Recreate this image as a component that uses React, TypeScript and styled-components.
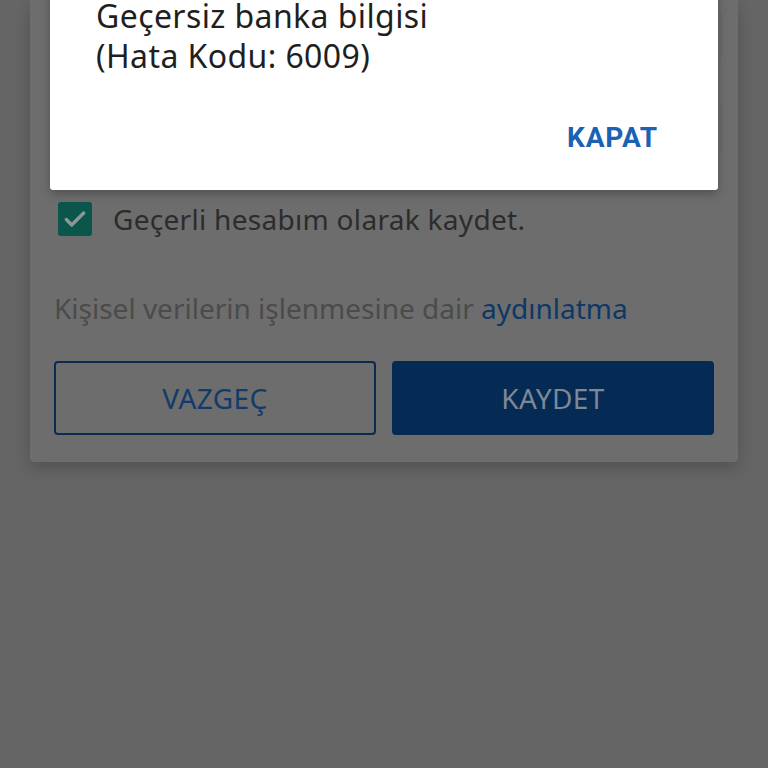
import React from "react";
import styled, { createGlobalStyle } from "styled-components";

const GlobalStyle = createGlobalStyle`
  html, body {
    margin: 0;
    padding: 0;
    background: #656565;
  }
  * {
    box-sizing: border-box;
  }
`;

const Screen = styled.div`
  position: relative;
  width: 768px;
  height: 768px;
  overflow: hidden;
  background: #656565;
  font-family: "Noto Sans", "Open Sans", sans-serif;
`;

const Card = styled.div`
  margin: 0 30px;
  padding: 8px 16px 27px 24px;
  background: #6d6d6d;
  border-radius: 0 0 4px 4px;
  box-shadow: 0 6px 16px rgba(0, 0, 0, 0.2);
  display: flex;
  flex-direction: column;
`;

const Field = styled.div<{ $gap: number }>`
  height: 54px;
  margin-bottom: ${(p) => p.$gap}px;
  border: 1px solid #666666;
  border-radius: 8px;
`;

const CheckRow = styled.label`
  display: flex;
  align-items: center;
  gap: 21px;
  padding-left: 4px;
  height: 34px;
  margin-bottom: 54px;
`;

const Box = styled.span`
  width: 34px;
  height: 34px;
  border-radius: 3px;
  background: #0a564b;
  display: flex;
  align-items: center;
  justify-content: center;
`;

const CheckLabel = styled.span`
  font-size: 28px;
  letter-spacing: 0.3px;
  color: #2c2c2c;
`;

const Consent = styled.p`
  margin: 0 0 35px;
  font-size: 28px;
  line-height: 36px;
  color: #4b4b4b;
  white-space: nowrap;
`;

const Link = styled.span`
  color: #0d3866;
`;

const Actions = styled.div`
  display: grid;
  grid-template-columns: 322px 322px;
  gap: 16px;
`;

const Button = styled.button<{ $primary?: boolean }>`
  height: 74px;
  border-radius: 4px;
  font-family: "Noto Sans", "Open Sans", sans-serif;
  font-size: 28px;
  letter-spacing: 0.4px;
  border: 2px solid ${(p) => (p.$primary ? "#052a54" : "#0c2a4e")};
  background: ${(p) => (p.$primary ? "#052a54" : "transparent")};
  color: ${(p) => (p.$primary ? "#7d8896" : "#123b6b")};
`;

const Dialog = styled.div`
  position: absolute;
  left: 50px;
  top: -40px;
  width: 668px;
  height: 230px;
  padding: 36px 60px 0 46px;
  background: #ffffff;
  border-radius: 3px;
  box-shadow: 0 4px 10px rgba(0, 0, 0, 0.25);
  display: flex;
  flex-direction: column;
`;

const Message = styled.p`
  margin: 0;
  font-family: "Noto Sans", Roboto, sans-serif;
  font-size: 32px;
  line-height: 40px;
  letter-spacing: 0.4px;
  color: #1f1f1f;
`;

const Close = styled.button`
  align-self: flex-end;
  margin-top: 45px;
  padding: 0;
  border: none;
  background: none;
  font-family: Roboto, "Noto Sans", sans-serif;
  font-weight: 700;
  font-size: 28px;
  letter-spacing: 0.8px;
  color: #1a62b4;
`;

const App = () => {
  return (
    <Screen>
      <GlobalStyle />
      <Card>
        <Field $gap={38} />
        <Field $gap={48} />
        <CheckRow>
          <Box>
            <svg width="26" height="26" viewBox="0 0 24 24" fill="none">
              <path
                d="M4 12.5l5 5L20 6.5"
                stroke="#8a9794"
                strokeWidth="3.2"
                strokeLinecap="round"
                strokeLinejoin="round"
              />
            </svg>
          </Box>
          <CheckLabel>Geçerli hesabım olarak kaydet.</CheckLabel>
        </CheckRow>
        <Consent>
          Kişisel verilerin işlenmesine dair <Link>aydınlatma</Link>
        </Consent>
        <Actions>
          <Button>VAZGEÇ</Button>
          <Button $primary>KAYDET</Button>
        </Actions>
      </Card>
      <Dialog>
        <Message>
          Geçersiz banka bilgisi
          <br />
          (Hata Kodu: 6009)
        </Message>
        <Close>KAPAT</Close>
      </Dialog>
    </Screen>
  );
};

export default App;
